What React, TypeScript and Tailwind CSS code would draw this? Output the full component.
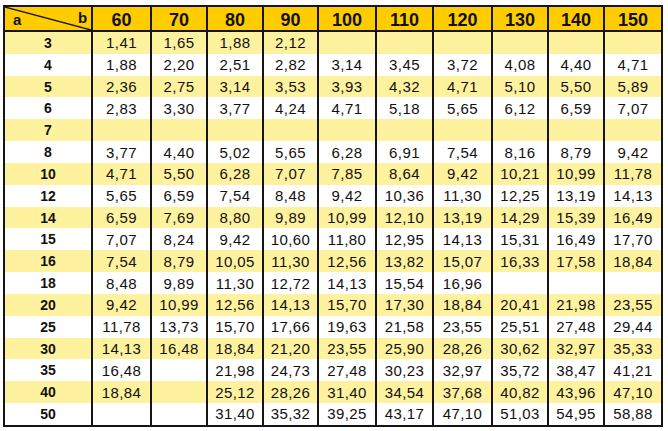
import React from "react";

const cols = ["60", "70", "80", "90", "100", "110", "120", "130", "140", "150"];

const rows: [string, string[]][] = [
  ["3", ["1,41", "1,65", "1,88", "2,12", "", "", "", "", "", ""]],
  ["4", ["1,88", "2,20", "2,51", "2,82", "3,14", "3,45", "3,72", "4,08", "4,40", "4,71"]],
  ["5", ["2,36", "2,75", "3,14", "3,53", "3,93", "4,32", "4,71", "5,10", "5,50", "5,89"]],
  ["6", ["2,83", "3,30", "3,77", "4,24", "4,71", "5,18", "5,65", "6,12", "6,59", "7,07"]],
  ["7", ["", "", "", "", "", "", "", "", "", ""]],
  ["8", ["3,77", "4,40", "5,02", "5,65", "6,28", "6,91", "7,54", "8,16", "8,79", "9,42"]],
  ["10", ["4,71", "5,50", "6,28", "7,07", "7,85", "8,64", "9,42", "10,21", "10,99", "11,78"]],
  ["12", ["5,65", "6,59", "7,54", "8,48", "9,42", "10,36", "11,30", "12,25", "13,19", "14,13"]],
  ["14", ["6,59", "7,69", "8,80", "9,89", "10,99", "12,10", "13,19", "14,29", "15,39", "16,49"]],
  ["15", ["7,07", "8,24", "9,42", "10,60", "11,80", "12,95", "14,13", "15,31", "16,49", "17,70"]],
  ["16", ["7,54", "8,79", "10,05", "11,30", "12,56", "13,82", "15,07", "16,33", "17,58", "18,84"]],
  ["18", ["8,48", "9,89", "11,30", "12,72", "14,13", "15,54", "16,96", "", "", ""]],
  ["20", ["9,42", "10,99", "12,56", "14,13", "15,70", "17,30", "18,84", "20,41", "21,98", "23,55"]],
  ["25", ["11,78", "13,73", "15,70", "17,66", "19,63", "21,58", "23,55", "25,51", "27,48", "29,44"]],
  ["30", ["14,13", "16,48", "18,84", "21,20", "23,55", "25,90", "28,26", "30,62", "32,97", "35,33"]],
  ["35", ["16,48", "", "21,98", "24,73", "27,48", "30,23", "32,97", "35,72", "38,47", "41,21"]],
  ["40", ["18,84", "", "25,12", "28,26", "31,40", "34,54", "37,68", "40,82", "43,96", "47,10"]],
  ["50", ["", "", "31,40", "35,32", "39,25", "43,17", "47,10", "51,03", "54,95", "58,88"]],
];

export default function App() {
  return (
    <div className="w-[668px] h-[431px] bg-white pt-[5px] pl-[3px]" style={{ fontFamily: '"Liberation Sans", Arial, sans-serif' }}>
      <div className="w-[660px] h-[422px] border-2 border-[#151515] text-[#111]">
        <div className="grid grid-cols-[86px_59px_56px_56px_55px_58px_57px_59px_56px_56px_58px] grid-rows-[25px_repeat(18,21.83px)]">
          {/* header */}
          <div className="relative bg-[#ffcc00] border-b-2 border-[#151515] font-bold text-[15px]">
            <svg className="absolute inset-0" width="86" height="23" viewBox="0 0 86 23" preserveAspectRatio="none">
              <line x1="0" y1="0" x2="86" y2="23" stroke="#151515" strokeWidth="1.3" />
            </svg>
            <span className="absolute left-[8px] top-[5px] leading-none">a</span>
            <span className="absolute left-[73px] top-[3px] leading-none">b</span>
          </div>
          {cols.map((c) => (
            <div key={c} className="bg-[#ffcc00] border-b-2 border-l-2 border-[#151515] flex items-center justify-center font-bold text-[18px] leading-none pt-[2px]">
              {c}
            </div>
          ))}
          {rows.map(([label, vals], i) => {
            const bg = i % 2 === 0 ? "bg-[#fff29e]" : "bg-white";
            return (
              <React.Fragment key={label}>
                <div className={`${bg} flex items-center justify-center font-bold text-[14px] leading-none`}>{label}</div>
                {vals.map((v, j) => (
                  <div key={j} className={`${bg} border-l-2 border-[#151515] flex items-center justify-center text-[15px] tracking-[0.4px] leading-none`}>
                    {v}
                  </div>
                ))}
              </React.Fragment>
            );
          })}
        </div>
      </div>
    </div>
  );
}
